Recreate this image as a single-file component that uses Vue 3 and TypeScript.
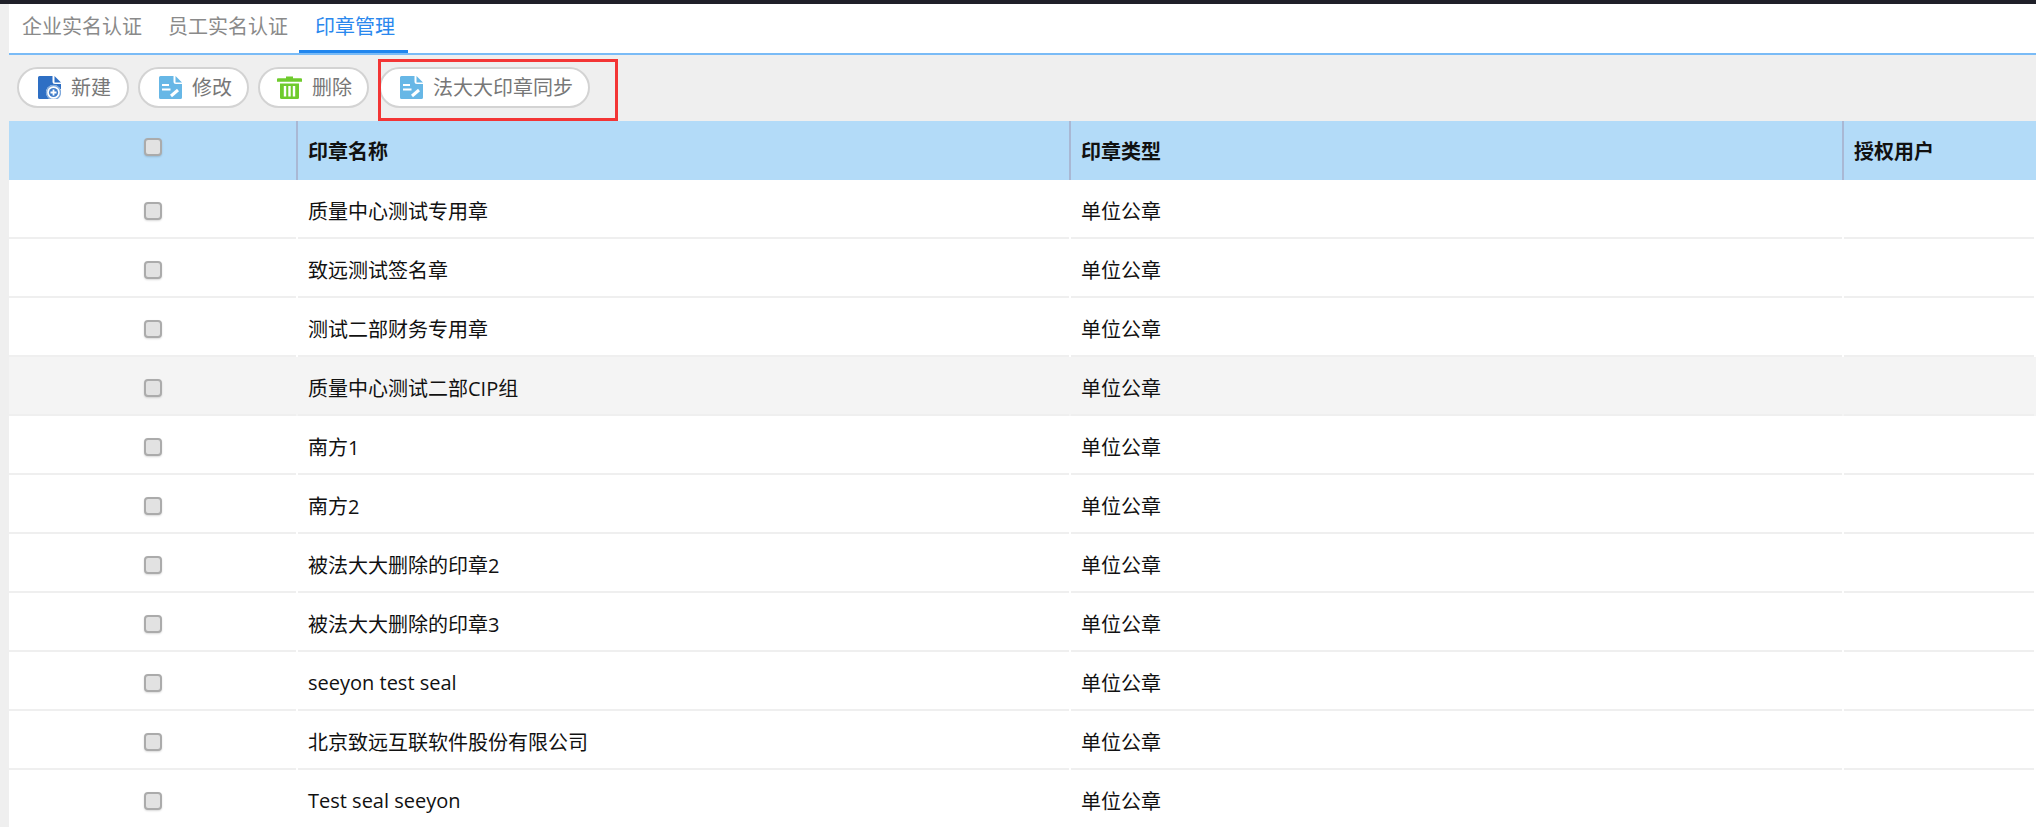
<script setup lang="ts">
const rows: string[] = [
  '质量中心测试专用章',
  '致远测试签名章',
  '测试二部财务专用章',
  '质量中心测试二部CIP组',
  '南方1',
  '南方2',
  '被法大大删除的印章2',
  '被法大大删除的印章3',
  'seeyon test seal',
  '北京致远互联软件股份有限公司',
  'Test seal seeyon',
]
const tabs = ['企业实名认证', '员工实名认证', '印章管理']
const hoverIndex = 3
</script>

<template>
  <div class="page">
    <div class="topbar"></div>
    <div class="content">
      <nav class="tabs">
        <span v-for="(t, i) in tabs" :key="t" class="tab" :class="{ active: i === 2 }">{{ t }}</span>
      </nav>
      <div class="toolbar">
        <button class="btn first">
          <svg class="ico" viewBox="0 0 23 23">
            <path d="M1.5 0H14.5v5.500q0 2.500 2.500 2.500H23v5H14V23H1.500A1.500 1.500 0 0 1 0 21.500v-20A1.500 1.500 0 0 1 1.500 0z" fill="#2e6fc4" />
            <path d="M16.500 0L23 6.500h-6.500z" fill="#2e6fc4" />
            <circle cx="15.500" cy="16.500" r="7.500" fill="#fff" />
            <circle cx="15.500" cy="16.500" r="7" fill="none" stroke="#7fa9dc" stroke-width="1.400" />
            <circle cx="15.500" cy="16.500" r="4.600" fill="#3f7cca" />
            <path d="M15.500 13.500v6M12.500 16.500h6" stroke="#fff" stroke-width="1.800" />
          </svg>
          <span class="label">新建</span>
        </button>
        <button class="btn">
          <svg class="ico" viewBox="0 0 23 23">
            <path d="M1.500 0H14.500v5.500q0 2.500 2.500 2.500H23v13.500a1.500 1.500 0 0 1-1.500 1.500h-20A1.500 1.500 0 0 1 0 21.500v-20A1.500 1.500 0 0 1 1.500 0z" fill="#67b7e6" />
            <path d="M16.500 0L23 6.500h-6.500z" fill="#67b7e6" />
            <path d="M3 9h7M3 13.500h8.500" stroke="#fff" stroke-width="1.800" />
            <path d="M12 20l7-6" stroke="#fff" stroke-width="3" />
          </svg>
          <span class="label">修改</span>
        </button>
        <button class="btn del">
          <svg class="ico trash" viewBox="0 0 25 23">
            <path d="M9 2.200V0.600h7v1.600h8a1 1 0 0 1 1 1v2.600H0V3.200a1 1 0 0 1 1-1z" fill="#6fcb2d" />
            <path d="M3 7.500h19v14a1.500 1.500 0 0 1-1.500 1.500h-16A1.500 1.500 0 0 1 3 21.500z" fill="#6fcb2d" />
            <path d="M8 10v10.500M12.500 10v10.500M17 10v10.500" stroke="#fff" stroke-width="2.400" />
          </svg>
          <span class="label">删除</span>
        </button>
        <button class="btn wide">
          <svg class="ico" viewBox="0 0 23 23">
            <path d="M1.500 0H14.500v5.500q0 2.500 2.500 2.500H23v13.500a1.500 1.500 0 0 1-1.500 1.500h-20A1.500 1.500 0 0 1 0 21.500v-20A1.500 1.500 0 0 1 1.500 0z" fill="#67b7e6" />
            <path d="M16.500 0L23 6.500h-6.500z" fill="#67b7e6" />
            <path d="M3 9h7M3 13.500h8.500" stroke="#fff" stroke-width="1.800" />
            <path d="M12 20l7-6" stroke="#fff" stroke-width="3" />
          </svg>
          <span class="label">法大大印章同步</span>
        </button>
        <div class="redbox"></div>
      </div>
      <div class="table">
        <div class="row head">
          <div class="cell check"><i class="cb"></i></div>
          <div class="cell">印章名称</div>
          <div class="cell">印章类型</div>
          <div class="cell">授权用户</div>
        </div>
        <div v-for="(name, i) in rows" :key="name" class="row" :class="{ hover: i === hoverIndex }">
          <div class="cell check"><i class="cb"></i></div>
          <div class="cell">{{ name }}</div>
          <div class="cell">单位公章</div>
          <div class="cell"></div>
        </div>
      </div>
    </div>
  </div>
</template>

<style>
html, body { margin: 0; height: 100%; overflow: hidden; background: #efefef; }
</style>

<style scoped>
.page {
  width: 2036px;
  height: 827px;
  overflow: hidden;
  background: #efefef;
  font-family: "Open Sans", "Noto Sans CJK SC", sans-serif;
  font-size: 20px;
  color: #111;
}
.topbar { height: 4px; background: #1f2029; }
.content { margin-left: 9px; }
.tabs {
  display: flex;
  height: 49px;
  background: #fff;
  border-bottom: 2px solid #7abbf6;
  padding-left: 13px;
  gap: 26px;
}
.tab {
  position: relative;
  color: #8a8a8a;
  line-height: 45px;
}
.tab.active { color: #2a88ee; margin-left: 1px; }
.tab.active::after {
  content: "";
  position: absolute;
  left: -16px;
  right: -13px;
  top: 46px;
  height: 3px;
  background: #2186ee;
}
.toolbar {
  position: relative;
  display: flex;
  height: 66px;
  box-sizing: border-box;
  padding: 12px 0 0 8px;
  gap: 10px;
  align-items: flex-start;
}
.btn {
  display: flex;
  align-items: center;
  gap: 10px;
  width: 111px;
  height: 41px;
  box-sizing: border-box;
  padding: 0 0 0 19px;
  border: 2px solid #d3d3d3;
  border-radius: 21px;
  background: #fff;
  color: #777;
  font: inherit;
}
.label { padding-bottom: 3px; }
.btn.first { width: 112px; margin-right: -1px; }
.btn.del { margin-left: -1px; padding-left: 17px; }
.btn.wide { width: 211px; padding-left: 19px; }
.ico { width: 23px; height: 23px; flex: none; }
.ico.trash { width: 25px; }
.redbox {
  position: absolute;
  left: 369px;
  top: 4px;
  width: 240px;
  height: 62px;
  box-sizing: border-box;
  border: 3px solid #f33535;
}
.table { background: #fff; }
.row {
  display: grid;
  grid-template-columns: 289px 773px 773px 1fr;
  height: 59px;
  background: #fff;
}
.row.hover { background: #f4f4f4; }
.cell {
  display: flex;
  align-items: center;
  box-sizing: border-box;
  padding: 2px 0 0 10px;
  background: linear-gradient(#efefef, #efefef) no-repeat left bottom / calc(100% - 2px) 2px;
}
.cell.check {
  justify-content: center;
  padding: 2px 2px 0 0;
}
.row.head { background: #b3dbf8; }
.row.head .cell {
  background: none;
  border-right: 2px solid #a9b8d4;
  font-weight: 700;
  padding-top: 0;
}
.row.head .cell.check { padding: 0 0 8px 0; }
.row.head .cell:last-child { border-right: 0; }
.cb {
  display: block;
  width: 18px;
  height: 18px;
  box-sizing: border-box;
  border: 2px solid #ababab;
  border-radius: 4px;
  background: #e2e2e2;
  box-shadow: 0 1px 2px rgba(0, 0, 0, 0.15);
}
</style>
